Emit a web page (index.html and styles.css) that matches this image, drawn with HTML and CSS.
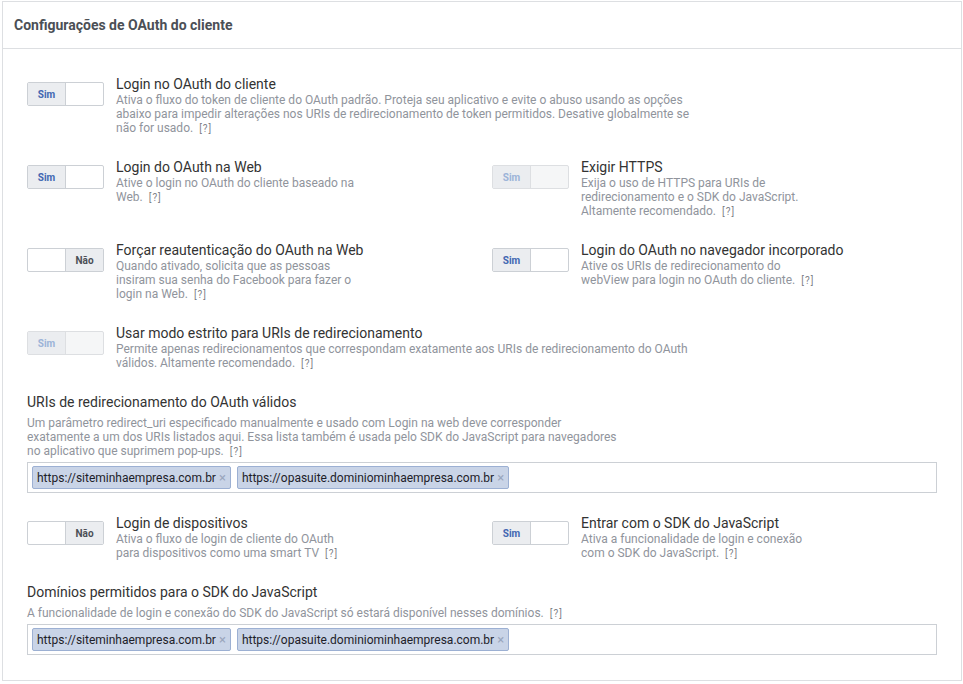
FILE: index.html
```html
<!DOCTYPE html>
<html lang="pt">
<head>
    <meta charset="UTF-8">
    <title>Configurações de OAuth do cliente</title>
    <link rel="stylesheet" href="styles.css">
</head>
<body>

<div class="panel">
    <div class="panel-header">Configurações de OAuth do cliente</div>

    <div class="panel-body">

        <!-- Login no OAuth do cliente -->
        <div class="row">
            <div class="setting wide">
                <div class="toggle"><span class="on active">Sim</span><span class="off"></span></div>
                <div class="info">
                    <div class="title">Login no OAuth do cliente</div>
                    <div class="desc">Ativa o fluxo do token de cliente do OAuth padrão. Proteja seu aplicativo e evite o abuso usando as opções abaixo para impedir alterações nos URIs de redirecionamento de token permitidos. Desative globalmente se não for usado.<span class="help">[?]</span></div>
                </div>
            </div>
        </div>

        <div class="row">
            <div class="setting">
                <div class="toggle"><span class="on active">Sim</span><span class="off"></span></div>
                <div class="info">
                    <div class="title">Login do OAuth na Web</div>
                    <div class="desc">Ative o login no OAuth do cliente baseado na Web.<span class="help">[?]</span></div>
                </div>
            </div>
            <div class="setting">
                <div class="toggle disabled"><span class="on active">Sim</span><span class="off"></span></div>
                <div class="info">
                    <div class="title">Exigir HTTPS</div>
                    <div class="desc">Exija o uso de HTTPS para URIs de redirecionamento e o SDK do JavaScript. Altamente recomendado.<span class="help">[?]</span></div>
                </div>
            </div>
        </div>

        <div class="row">
            <div class="setting">
                <div class="toggle"><span class="on"></span><span class="off active">Não</span></div>
                <div class="info">
                    <div class="title">Forçar reautenticação do OAuth na Web</div>
                    <div class="desc">Quando ativado, solicita que as pessoas insiram sua senha do Facebook para fazer o login na Web.<span class="help">[?]</span></div>
                </div>
            </div>
            <div class="setting">
                <div class="toggle"><span class="on active">Sim</span><span class="off"></span></div>
                <div class="info">
                    <div class="title">Login do OAuth no navegador incorporado</div>
                    <div class="desc">Ative os URIs de redirecionamento do webView para login no OAuth do cliente.<span class="help">[?]</span></div>
                </div>
            </div>
        </div>

        <div class="row">
            <div class="setting wide">
                <div class="toggle disabled"><span class="on active">Sim</span><span class="off"></span></div>
                <div class="info">
                    <div class="title">Usar modo estrito para URIs de redirecionamento</div>
                    <div class="desc">Permite apenas redirecionamentos que correspondam exatamente aos URIs de redirecionamento do OAuth válidos. Altamente recomendado.<span class="help">[?]</span></div>
                </div>
            </div>
        </div>

        <!-- URIs válidos -->
        <div class="field">
            <div class="title">URIs de redirecionamento do OAuth válidos</div>
            <div class="desc field-desc">Um parâmetro redirect_uri especificado manualmente e usado com Login na web deve corresponder exatamente a um dos URIs listados aqui. Essa lista também é usada pelo SDK do JavaScript para navegadores no aplicativo que suprimem pop-ups.<span class="help">[?]</span></div>
            <div class="tag-box">
                <span class="tag">https://siteminhaempresa.com.br<span class="x">&times;</span></span>
                <span class="tag">https://opasuite.dominiominhaempresa.com.br<span class="x">&times;</span></span>
            </div>
        </div>

        <div class="row">
            <div class="setting">
                <div class="toggle"><span class="on"></span><span class="off active">Não</span></div>
                <div class="info">
                    <div class="title">Login de dispositivos</div>
                    <div class="desc">Ativa o fluxo de login de cliente do OAuth para dispositivos como uma smart TV<span class="help">[?]</span></div>
                </div>
            </div>
            <div class="setting">
                <div class="toggle"><span class="on active">Sim</span><span class="off"></span></div>
                <div class="info">
                    <div class="title">Entrar com o SDK do JavaScript</div>
                    <div class="desc">Ativa a funcionalidade de login e conexão com o SDK do JavaScript.<span class="help">[?]</span></div>
                </div>
            </div>
        </div>

        <!-- Domínios permitidos -->
        <div class="field">
            <div class="title">Domínios permitidos para o SDK do JavaScript</div>
            <div class="desc field-desc">A funcionalidade de login e conexão do SDK do JavaScript só estará disponível nesses domínios.<span class="help">[?]</span></div>
            <div class="tag-box">
                <span class="tag">https://siteminhaempresa.com.br<span class="x">&times;</span></span>
                <span class="tag">https://opasuite.dominiominhaempresa.com.br<span class="x">&times;</span></span>
            </div>
        </div>

    </div>
</div>

</body>
</html>
```

FILE: styles.css
```css
body {
    font-family: Roboto, "Liberation Sans", Arial, sans-serif;
    background-color: #fff;
    margin: 0;
    padding: 1px 1px 0 2px;
}

.panel {
    border: 1px solid #dddfe2;
    background-color: #fff;
    height: 680px;
    box-sizing: border-box;
}

.panel-header {
    height: 46px;
    line-height: 46px;
    padding: 0 11px;
    font-size: 14px;
    font-weight: bold;
    color: #4b4f56;
    border-bottom: 1px solid #dddfe2;
}

.panel-body {
    padding: 26px 24px 0 24px;
    display: flex;
    flex-direction: column;
    gap: 23px;
}

.row {
    display: grid;
    grid-template-columns: 465px 1fr;
}

.setting {
    display: flex;
    align-items: flex-start;
}

.setting.wide {
    grid-column: 1 / 3;
}

.info {
    margin-left: 12px;
}

.info .desc {
    width: 240px;
}

.setting.wide .info .desc {
    width: 576px;
}

.title {
    font-size: 14px;
    line-height: 18px;
    color: #333;
    white-space: nowrap;
}

.desc {
    font-size: 12px;
    line-height: 14px;
    color: #90949c;
}

.help {
    font-size: 10px;
    line-height: 10px;
    color: #7f8389;
    margin-left: 6px;
    letter-spacing: 1px;
}

/* toggle sim / não */
.toggle {
    display: flex;
    flex-shrink: 0;
    width: 77px;
    height: 24px;
    margin-top: 7px;
    border: 1px solid #ccd0d5;
    border-radius: 2px;
    box-sizing: border-box;
    background-color: #fff;
    overflow: hidden;
}

.toggle span {
    width: 38px;
    height: 100%;
    display: flex;
    align-items: center;
    justify-content: center;
    font-size: 10px;
    font-weight: bold;
}

.toggle .on {
    border-right: 1px solid #ccd0d5;
    color: #4267b2;
}

.toggle .off {
    color: #4b4f56;
}

.toggle .active {
    background-color: #ebedf0;
}

.toggle.disabled {
    border-color: #dddfe2;
    background-color: #f5f6f7;
}

.toggle.disabled .on {
    color: #9cb4d8;
    border-right-color: #dddfe2;
}

/* campos com tags */
.field {
    margin-bottom: -2px;
}

.field .field-desc {
    margin-top: 5px;
    max-width: 600px;
}

.tag-box {
    margin-top: 4px;
    border: 1px solid #ccd0d5;
    height: 31px;
    box-sizing: border-box;
    padding: 3px 4px;
    display: flex;
    gap: 6px;
}

.tag {
    display: inline-flex;
    align-items: center;
    height: 23px;
    box-sizing: border-box;
    padding: 0 4px 0 4px;
    background-color: #c9d4e7;
    border: 1px solid #9cb0d3;
    border-radius: 2px;
    font-size: 12px;
    color: #1d2129;
}

.tag .x {
    margin-left: 3px;
    color: #9aa6bd;
    font-size: 13px;
}
```
